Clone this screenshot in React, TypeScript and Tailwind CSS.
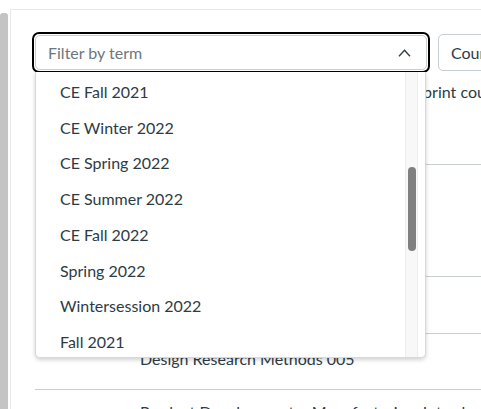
import React from 'react';

const terms = [
  'CE Fall 2021',
  'CE Winter 2022',
  'CE Spring 2022',
  'CE Summer 2022',
  'CE Fall 2022',
  'Spring 2022',
  'Wintersession 2022',
  'Fall 2021',
];

// term filter select, opened, over the course list
export default function App() {
  return (
    <div className="relative w-[481px] h-[409px] overflow-hidden bg-white font-['Lato','Noto_Sans',sans-serif] text-[#2d3b45]">
      <div className="flex h-full">
        {/* left rail */}
        <div className="w-2 shrink-0 mt-[13px] bg-[#c4c4c4] rounded-t-[3px]" />

        <div className="ml-[2px] mt-[9px] flex-1 border-l border-t border-[#e6e8ea]">
          {/* filters row */}
          <div className="flex items-center gap-2 pl-[21px] pt-[22px]">
            <div className="w-[398px] h-[41px] shrink-0 rounded-[7px] border-2 border-black p-px">
              <div className="h-full flex items-center justify-between rounded-[5px] border border-[#c7cdd1] pl-3 pr-[15px]">
                <span className="text-[16px] text-[#6b7780]">Filter by term</span>
                <svg width="13" height="8" viewBox="0 0 13 8" fill="none">
                  <polyline points="1,7.2 6.5,1.2 12,7.2" stroke="#2d3b45" strokeWidth="1.3" />
                </svg>
              </div>
            </div>
            <div className="h-[37px] shrink-0 flex items-center rounded-[5px] border border-[#c7cdd1] px-3 text-[16px]">
              Courses
            </div>
          </div>

          <div className="mt-[7px] ml-[382px] h-6 text-[16px] leading-6 whitespace-nowrap">
            blueprint courses
          </div>

          {/* course rows */}
          <div className="ml-6 mt-[60px]">
            <div className="h-[112px] border-t border-[#c7cdd1]" />
            <div className="h-[57px] border-t border-[#c7cdd1]" />
            <div className="h-[56px] border-t border-[#c7cdd1] pl-[105px] pt-[13px] text-[16px] leading-6 whitespace-nowrap">
              Design Research Methods 005
            </div>
            <div className="h-[56px] border-t border-[#c7cdd1] pl-[105px] pt-[10px] text-[16px] leading-6 whitespace-nowrap">
              Product Development + Manufacturing: Introduction
            </div>
          </div>
        </div>
      </div>

      {/* open dropdown */}
      <div className="absolute left-[35px] top-[72px] w-[391px] h-[286px] overflow-hidden bg-white border border-t-0 border-[#d5d9dc] rounded-b-[5px] shadow-[0_2px_4px_rgba(0,0,0,0.18)]">
        <div className="pt-[2px]">
          {terms.map((t) => (
            <div key={t} className="h-[35.75px] flex items-center pl-6 text-[16px]">
              {t}
            </div>
          ))}
        </div>
        <div className="absolute left-[369px] top-0 bottom-0 w-[13px] bg-[#f8f8f8] border-x border-[#ededed]" />
        <div className="absolute left-[372px] top-[95px] w-2 h-[84px] rounded-full bg-[#808080]" />
      </div>
    </div>
  );
}
